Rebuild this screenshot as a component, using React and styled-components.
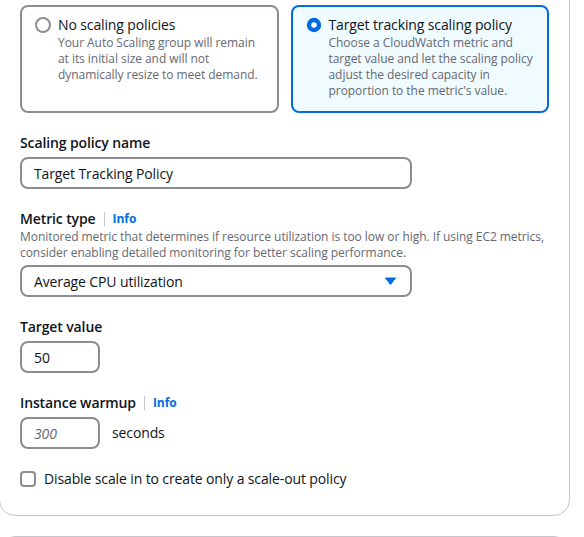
import React from "react";
import styled, { createGlobalStyle } from "styled-components";

const FONT = `"Open Sans", "Noto Sans", sans-serif`;

const Global = createGlobalStyle`
  html, body { margin: 0; padding: 0; overflow: hidden; background: #ffffff; }
  body {
    font-family: ${FONT};
    color: #0f141a;
    font-size: 14px;
    line-height: 20px;
    letter-spacing: -0.12px;
  }
  * { box-sizing: border-box; }
`;

const Page = styled.div`
  display: flex;
  flex-direction: column;
  gap: 20px;
  width: 571px;
  margin: -16px 0 0 -1px;
`;

const Container = styled.section`
  display: flex;
  flex-direction: column;
  gap: 20px;
  background: #ffffff;
  border: 1px solid #c6c6cd;
  border-radius: 16px;
  padding: 20px 20px 26px;
  min-height: ${(p) => p.$minHeight || "auto"};
`;

const Tiles = styled.div`
  display: grid;
  grid-template-columns: 1fr 1fr;
  gap: 12px;
`;

const Tile = styled.label`
  display: flex;
  align-items: flex-start;
  gap: 7px;
  padding: 8px 11px 12px 13px;
  border: 2px solid ${(p) => (p.$selected ? "#006ce0" : "#8c8c94")};
  background: ${(p) => (p.$selected ? "#f0fbff" : "#ffffff")};
  border-radius: 8px;
  cursor: pointer;
`;

const RadioWrap = styled.span`
  display: flex;
  align-items: center;
  height: 20px;
  flex: none;
`;

const TileText = styled.span`
  display: flex;
  flex-direction: column;
`;

const TileTitle = styled.span`
  font-size: 14px;
  line-height: 20px;
  color: #0f141a;
`;

const Description = styled.span`
  font-size: 12px;
  line-height: 16px;
  letter-spacing: -0.05px;
  color: #656871;
`;

const Field = styled.div`
  display: flex;
  flex-direction: column;
`;

const LabelRow = styled.div`
  display: flex;
  align-items: center;
  font-size: 14px;
  line-height: 20px;
  font-weight: 600;
  color: #0f141a;
`;

const Divider = styled.span`
  width: 1px;
  height: 14px;
  background: #c6c6cd;
  margin: 0 8px;
`;

const InfoLink = styled.a`
  font-size: 12px;
  line-height: 16px;
  font-weight: 700;
  letter-spacing: -0.05px;
  color: #006ce0;
  text-decoration: none;
`;

const Control = styled.div`
  display: flex;
  align-items: center;
  gap: 12px;
  margin-top: 4px;
`;

const Input = styled.input`
  width: ${(p) => p.$width};
  height: 32px;
  border: 2px solid #8c8c94;
  border-radius: 8px;
  padding: 0 12px;
  font-family: ${FONT};
  font-size: 14px;
  letter-spacing: -0.12px;
  color: #0f141a;
  background: #ffffff;
  outline: none;
  &::placeholder {
    color: #656871;
    font-style: italic;
    opacity: 1;
  }
`;

const Select = styled.button`
  width: 392px;
  height: 32px;
  display: flex;
  align-items: center;
  justify-content: space-between;
  border: 2px solid #8c8c94;
  border-radius: 8px;
  padding: 0 12px;
  background: #ffffff;
  font-family: ${FONT};
  font-size: 14px;
  letter-spacing: -0.12px;
  color: #0f141a;
  text-align: left;
`;

const Unit = styled.span`
  font-size: 14px;
  color: #0f141a;
`;

const CheckRow = styled.label`
  display: flex;
  align-items: center;
  gap: 8px;
  font-size: 14px;
  line-height: 20px;
  color: #0f141a;
`;

const Radio = ({ checked }) => (
  <svg width="16" height="16" viewBox="0 0 16 16">
    {checked ? (
      <circle cx="8" cy="8" r="5" fill="#ffffff" stroke="#006ce0" strokeWidth="4.4" />
    ) : (
      <circle cx="8" cy="8" r="7" fill="#ffffff" stroke="#8c8c94" strokeWidth="2" />
    )}
  </svg>
);

const Caret = () => (
  <svg width="16" height="16" viewBox="0 0 16 16">
    <path d="M3.5 5h10l-5 6.5z" fill="#006ce0" stroke="#006ce0" strokeWidth="1" strokeLinejoin="round" />
  </svg>
);

const CheckBox = () => (
  <svg width="16" height="16" viewBox="0 0 16 16">
    <rect x="1" y="1" width="14" height="14" rx="3" fill="#ffffff" stroke="#8c8c94" strokeWidth="2" />
  </svg>
);

export default function App() {
  return (
    <>
      <Global />
      <Page>
        <Container>
          <Tiles>
            <Tile>
              <RadioWrap>
                <Radio />
              </RadioWrap>
              <TileText>
                <TileTitle>No scaling policies</TileTitle>
                <Description>
                  Your Auto Scaling group will remain at its initial size and will not dynamically resize to meet demand.
                </Description>
              </TileText>
            </Tile>
            <Tile $selected>
              <RadioWrap>
                <Radio checked />
              </RadioWrap>
              <TileText>
                <TileTitle>Target tracking scaling policy</TileTitle>
                <Description>
                  Choose a CloudWatch metric and target value and let the scaling policy adjust the desired capacity in proportion to the metric's value.
                </Description>
              </TileText>
            </Tile>
          </Tiles>

          <Field>
            <LabelRow>Scaling policy name</LabelRow>
            <Control>
              <Input $width="392px" defaultValue="Target Tracking Policy" />
            </Control>
          </Field>

          <Field>
            <LabelRow>
              Metric type
              <Divider />
              <InfoLink>Info</InfoLink>
            </LabelRow>
            <Description>
              Monitored metric that determines if resource utilization is too low or high. If using EC2 metrics, consider enabling detailed monitoring for better scaling performance.
            </Description>
            <Control>
              <Select type="button">
                <span>Average CPU utilization</span>
                <Caret />
              </Select>
            </Control>
          </Field>

          <Field>
            <LabelRow>Target value</LabelRow>
            <Control>
              <Input $width="80px" defaultValue="50" />
            </Control>
          </Field>

          <Field>
            <LabelRow>
              Instance warmup
              <Divider />
              <InfoLink>Info</InfoLink>
            </LabelRow>
            <Control>
              <Input $width="80px" placeholder="300" />
              <Unit>seconds</Unit>
            </Control>
          </Field>

          <CheckRow>
            <CheckBox />
            Disable scale in to create only a scale-out policy
          </CheckRow>
        </Container>
        <Container $minHeight="80px" />
      </Page>
    </>
  );
}
